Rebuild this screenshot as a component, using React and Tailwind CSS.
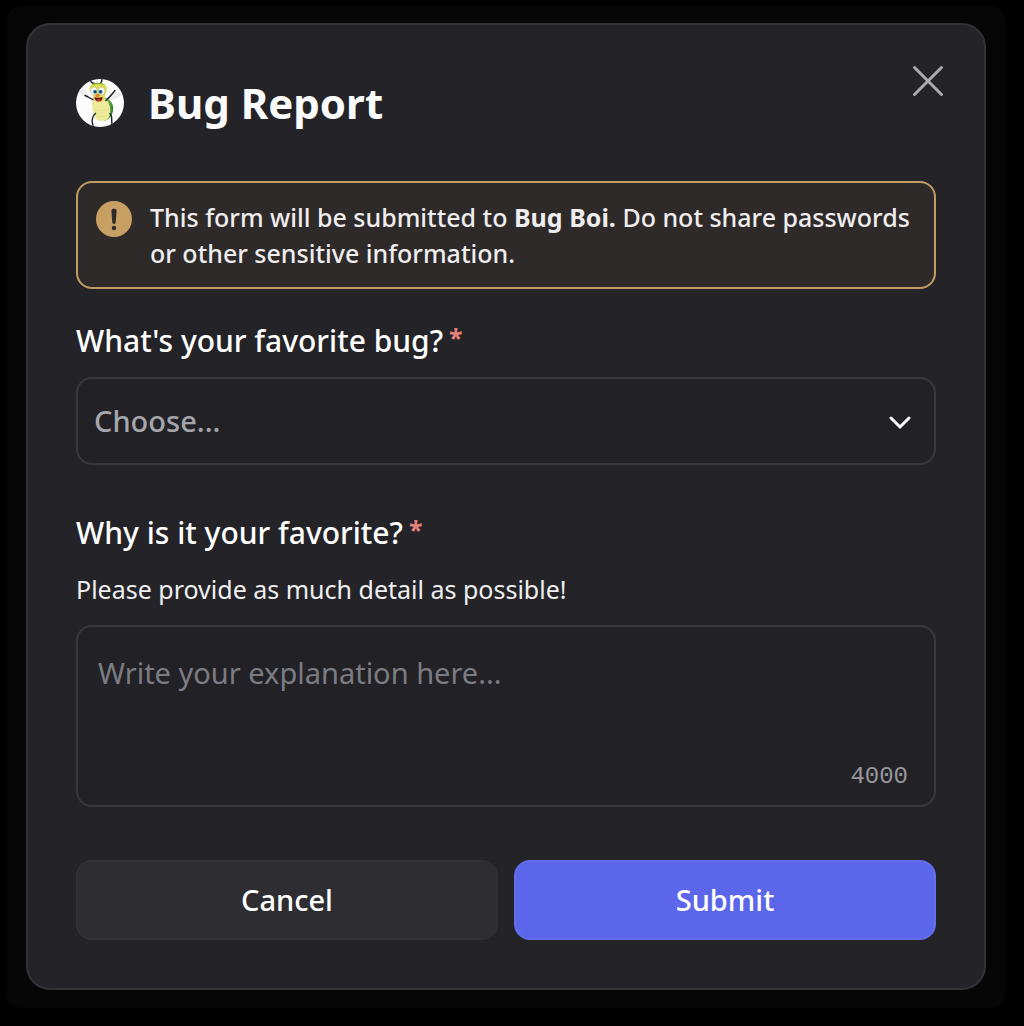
function BugAvatar() {
  return (
    <svg viewBox="0 0 48 48" className="size-12 shrink-0" role="img" aria-label="Bug Boi">
      <defs>
        <clipPath id="avatar-circle">
          <circle cx="24" cy="24" r="24" />
        </clipPath>
        <linearGradient id="bug-shell" x1="0" x2="1">
          <stop offset="0.3" stopColor="#8cc65c" />
          <stop offset="1" stopColor="#2a7d2a" />
        </linearGradient>
      </defs>
      <g clipPath="url(#avatar-circle)">
        <rect width="48" height="48" fill="#fdfdfd" />
        <g fill="#ededed">
          <path d="M15 19C10 12 6 8 4 10s0 8 10 10z" />
          <path d="M31 20c7-6 12-9 14-6s-5 7-14 8z" />
        </g>
        <path d="M28 18c7 2 10 8 9 14-1 5-4 9-9 10z" fill="url(#bug-shell)" />
        <path d="M16 23c1-3 5-4 9-4 5 0 8 4 9 10 1 8-2 13-8 13-6 0-8-3-9-9-1-4-1-7-1-10z" fill="#eeeb9c" />
        <path d="M17 30c5 2 11 2 17 0M18 36c5 2 10 2 15 0" fill="none" stroke="#dcdc7e" strokeWidth="0.600" />
        <g fill="none" stroke="#18202a" strokeWidth="1.400" strokeLinecap="round">
          <path d="M19 4.500c-3 0-4-1-5-3.500M24.500 4.500c1-1 1.500-2.500 1.500-4.500" />
          <path d="M17 20.500c-3-1-5-3-8-4M30 21.500c3-3 6-6 9-10" />
          <path d="M19.500 34.500c-3 2-3 5-3.500 8l1 4M34 34.500c3 3 1 6 2 11" />
        </g>
        <path d="M13.500 10c0-4 3-6 8.500-6s9 2 9 6c0 3-2 5-2 7 0 4-3 6-6 6-4 0-6-3-6-6 0-2-3.500-4-3.500-7z" fill="#e0db55" />
        <path d="M15.500 6c3-3 10-3 13.500 0-4-1.200-9-1.200-13.500 0z" fill="#77a833" />
        <g fill="#ffffff" stroke="#8fa65a" strokeWidth="0.400">
          <ellipse cx="18" cy="12" rx="3.300" ry="3.900" />
          <ellipse cx="25.500" cy="12" rx="3.300" ry="3.900" />
        </g>
        <g fill="#2d78b5">
          <circle cx="19" cy="12.800" r="2" />
          <circle cx="24.600" cy="12.800" r="2" />
        </g>
        <g fill="#10202e">
          <circle cx="19.200" cy="12.800" r="0.900" />
          <circle cx="24.400" cy="12.800" r="0.900" />
        </g>
        <ellipse cx="21.500" cy="16.500" rx="2.200" ry="1.400" fill="#e8852c" />
        <path d="M18.500 18c2 1 5.500 1 8 0 0 3.400-1.800 4.400-4 4.400S18.500 21 18.500 18z" fill="#7a1218" />
        <path d="M20.500 21c1-1 3-1 4 0-1 1.300-3 1.300-4 0z" fill="#e0454a" />
      </g>
    </svg>
  );
}

function FieldLabel({ htmlFor, children }) {
  return (
    <label htmlFor={htmlFor} className="flex gap-1.5 text-[30px] leading-10 font-medium text-white">
      {children}
      <span className="text-[25px] leading-8 font-bold text-[#e5807b]">*</span>
    </label>
  );
}

export default function App() {
  return (
    <div className="min-h-screen bg-black pt-1.5 pr-[18px] pb-[18px] pl-1.5 font-['Noto_Sans',sans-serif]">
      <div className="rounded-2xl bg-[#060606] px-5 pt-[17px] pb-[18px]">
        <form
          onSubmit={(event) => event.preventDefault()}
          aria-labelledby="dialog-title"
          className="rounded-3xl border-2 border-[#333337] bg-[#242428] px-12 pb-12"
        >
          <header className="flex items-start justify-between pt-10">
            <div className="flex items-center gap-6 pt-3.5">
              <BugAvatar />
              <h1 id="dialog-title" className="text-[42px] leading-12 font-bold text-[#fbfbfb]">
                Bug Report
              </h1>
            </div>
            <button type="button" aria-label="Close" className="-mr-2 text-[#aaaab1]">
              <svg viewBox="0 0 32 32" className="size-8" fill="none" stroke="currentColor" strokeWidth="3" strokeLinecap="round">
                <path d="M2.500 2.500l27 27M29.500 2.500l-27 27" />
              </svg>
            </button>
          </header>

          <div role="note" className="mt-[54px] flex gap-[18px] rounded-2xl border-2 border-[#c29c62] bg-[#2e2a2a] py-4 pr-4 pl-[18px]">
            <svg viewBox="0 0 36 36" className="mt-0.5 size-9 shrink-0" aria-hidden="true">
              <circle cx="18" cy="18" r="18" fill="#c79f63" />
              <path d="M15.400 9.800a2 2 0 0 1 2-2h1.200a2 2 0 0 1 2 2l-.9 11.400a1.700 1.700 0 0 1-3.400 0z" fill="#2e2a2a" />
              <circle cx="18" cy="27" r="2.200" fill="#2e2a2a" />
            </svg>
            <p className="text-[25px] leading-9 font-medium text-[#efedee]">
              This form will be submitted to <strong className="font-bold">Bug Boi.</strong> Do not share passwords or other sensitive information.
            </p>
          </div>

          <div className="mt-8">
            <FieldLabel htmlFor="favorite-bug">What's your favorite bug?</FieldLabel>
            <div className="mt-4 grid items-center">
              <select
                id="favorite-bug"
                required
                defaultValue=""
                className="col-start-1 row-start-1 h-[88px] w-full appearance-none rounded-2xl border-2 border-[#38383d] bg-[#222226] px-4 text-[29px] font-medium text-[#a5a5ac]"
              >
                <option value="">Choose...</option>
              </select>
              <svg
                viewBox="0 0 24 24"
                className="pointer-events-none col-start-1 row-start-1 mr-6 size-6 justify-self-end"
                fill="none"
                stroke="#fbfbfb"
                strokeWidth="3"
                strokeLinecap="round"
                aria-hidden="true"
              >
                <path d="M3 9l9 9 9-9" />
              </svg>
            </div>
          </div>

          <div className="mt-12">
            <FieldLabel htmlFor="reason">Why is it your favorite?</FieldLabel>
            <p id="reason-help" className="mt-[18px] text-[25px] leading-9 text-[#efeff0]">
              Please provide as much detail as possible!
            </p>
            <div className="mt-[18px] rounded-2xl border-2 border-[#38383d] bg-[#222226] px-5 pt-6 pb-2.5">
              <textarea
                id="reason"
                required
                maxLength={4000}
                aria-describedby="reason-help"
                placeholder="Write your explanation here..."
                className="block h-27 w-full resize-none bg-transparent text-[29px] leading-11 text-white outline-none placeholder:text-[#7c7c83]"
              />
              <div className="mr-1.5 text-right font-['Liberation_Mono',monospace] text-2xl leading-9 text-[#97979e]">4000</div>
            </div>
          </div>

          <footer className="mt-[53px] grid grid-cols-2 gap-4">
            <button type="button" className="h-20 rounded-2xl border-2 border-[#313135] bg-[#2e2e32] text-[29px] font-medium text-white">
              Cancel
            </button>
            <button type="submit" className="h-20 rounded-2xl border-2 border-[#636eeb] bg-[#5b66ea] text-[29px] font-medium text-white">
              Submit
            </button>
          </footer>
        </form>
      </div>
    </div>
  );
}
